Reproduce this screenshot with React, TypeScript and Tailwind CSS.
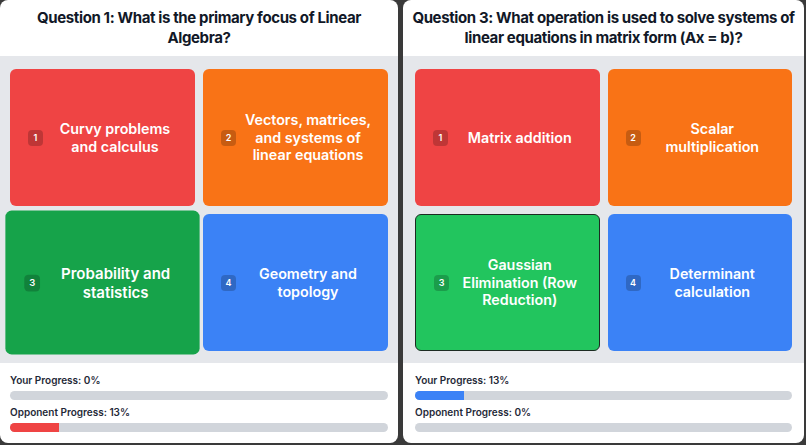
import React from 'react';

type Option = { label: string; color: string };

type Panel = {
  question: string;
  options: Option[];
  you: number;
  opponent: number;
  width: string;
  pad: string;
};

const panels: Panel[] = [
  {
    question: 'Question 1: What is the primary focus of Linear Algebra?',
    options: [
      { label: 'Curvy problems and calculus', color: 'bg-[#ef4444]' },
      { label: 'Vectors, matrices, and systems of linear equations', color: 'bg-[#f97316]' },
      { label: 'Probability and statistics', color: 'bg-[#16a34a] scale-105' },
      { label: 'Geometry and topology', color: 'bg-[#3b82f6]' },
    ],
    you: 0,
    opponent: 13,
    width: 'w-[398px]',
    pad: 'px-[10px]',
  },
  {
    question: 'Question 3: What operation is used to solve systems of linear equations in matrix form (Ax = b)?',
    options: [
      { label: 'Matrix addition', color: 'bg-[#ef4444]' },
      { label: 'Scalar multiplication', color: 'bg-[#f97316]' },
      { label: 'Gaussian Elimination (Row Reduction)', color: 'bg-[#22c55e] border border-[#1c2b22]' },
      { label: 'Determinant calculation', color: 'bg-[#3b82f6]' },
    ],
    you: 13,
    opponent: 0,
    width: 'w-[401px]',
    pad: 'px-3',
  },
];

function ProgressBar({ label, value, fill }: { label: string; value: number; fill: string }) {
  return (
    <div>
      <div className="text-[10px] leading-[14px] font-semibold text-[#1f2937]">
        {label}: {value}%
      </div>
      <div className="mt-1 h-[9px] w-full rounded-full bg-[#d1d5db] overflow-hidden">
        <div className={`h-full ${fill}`} style={{ width: `${value}%` }} />
      </div>
    </div>
  );
}

function QuizPanel({ panel }: { panel: Panel }) {
  return (
    <div className={`${panel.width} h-[443px] shrink-0 bg-white rounded-lg overflow-hidden flex flex-col`}>
      <div className="px-[7px] py-2 border-b border-[#e5e7eb] text-center text-[15px] leading-5 font-bold tracking-tight text-[#111827]">
        {panel.question}
      </div>
      <div className={`bg-[#e5e7eb] ${panel.pad} py-3 grid grid-cols-2 grid-rows-[137px_137px] gap-2`}>
        {panel.options.map((opt, i) => (
          <button
            key={i}
            className={`${opt.color} rounded-md flex items-center gap-2 pl-[18px] pr-[16px] text-white`}
          >
            <span className="shrink-0 w-[15px] h-[16px] rounded-sm bg-black/20 text-[9px] font-semibold flex items-center justify-center">
              {i + 1}
            </span>
            <span className="flex-1 text-center text-[14.3px] leading-[17.5px] font-semibold">
              {opt.label}
            </span>
          </button>
        ))}
      </div>
      <div className={`flex-1 ${panel.pad} pt-[10px] flex flex-col gap-[5px]`}>
        <ProgressBar label="Your Progress" value={panel.you} fill="bg-[#3b82f6]" />
        <ProgressBar label="Opponent Progress" value={panel.opponent} fill="bg-[#ef4444]" />
      </div>
    </div>
  );
}

export default function App() {
  return (
    <div
      className="w-[806px] h-[445px] bg-[#3a3a3a] overflow-hidden flex gap-[5px]"
      style={{ fontFamily: 'Inter, "Noto Sans", sans-serif' }}
    >
      {panels.map((p, i) => (
        <QuizPanel key={i} panel={p} />
      ))}
    </div>
  );
}
